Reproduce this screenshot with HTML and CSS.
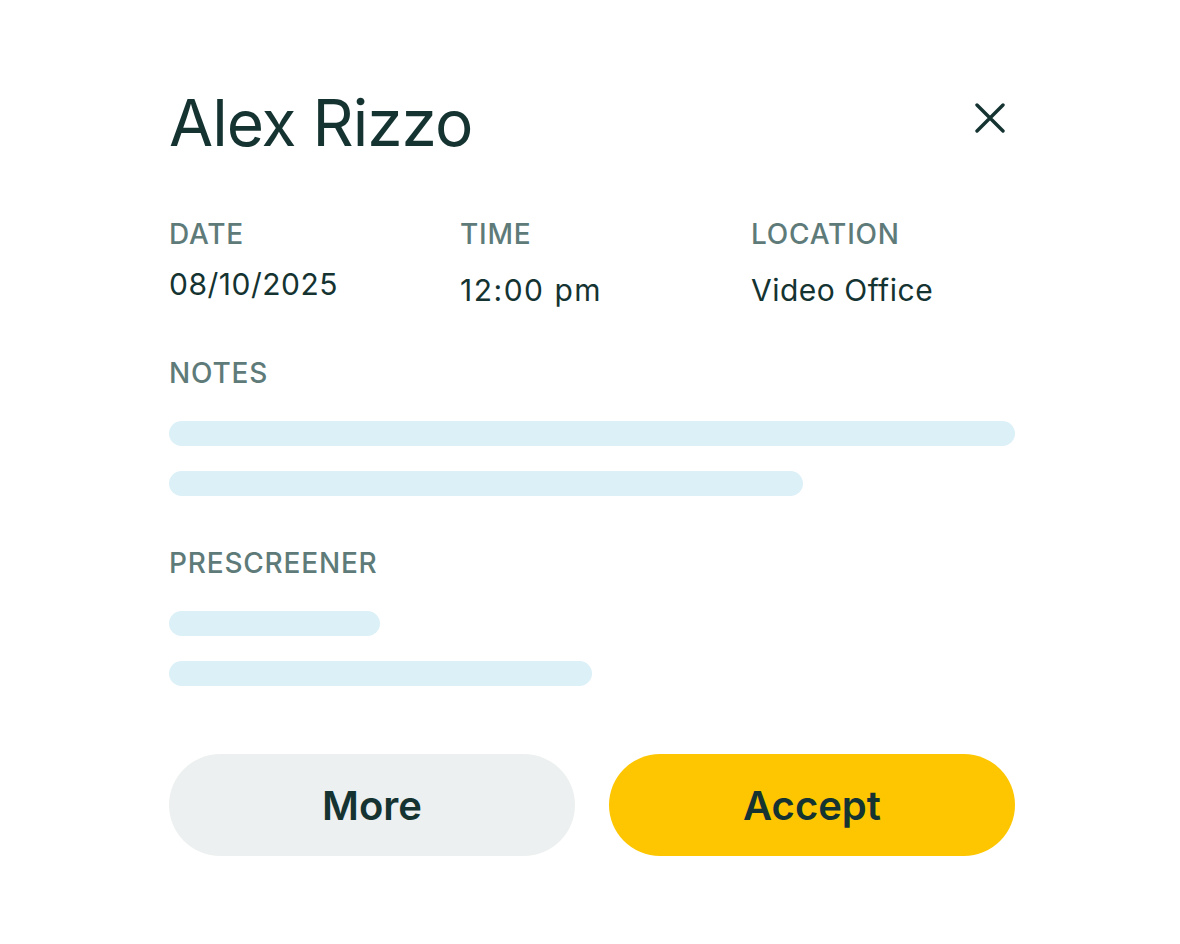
FILE: index.html
```html
<!DOCTYPE html>
<html lang="en">
<head>
<meta charset="utf-8">
<title>Appointment</title>
<link rel="stylesheet" href="styles.css">
</head>
<body>
<main class="card">
  <header class="card-head">
    <h1 class="title">Alex Rizzo</h1>
    <button class="close" aria-label="Close">
      <svg width="30" height="30" viewBox="0 0 30 30" fill="none" stroke="#143331" stroke-width="3.4" stroke-linecap="round">
        <path d="M2 2 L28 28 M28 2 L2 28"/>
      </svg>
    </button>
  </header>

  <section class="details">
    <div class="field">
      <div class="label">DATE</div>
      <div class="value value-date">08/10/2025</div>
    </div>
    <div class="field">
      <div class="label">TIME</div>
      <div class="value value-time">12:00 pm</div>
    </div>
    <div class="field">
      <div class="label">LOCATION</div>
      <div class="value">Video Office</div>
    </div>
  </section>

  <section class="block block-notes">
    <div class="label">NOTES</div>
    <div class="lines">
      <div class="line" style="width:846px"></div>
      <div class="line" style="width:634px"></div>
    </div>
  </section>

  <section class="block block-pre">
    <div class="label">PRESCREENER</div>
    <div class="lines">
      <div class="line" style="width:211px"></div>
      <div class="line" style="width:423px"></div>
    </div>
  </section>

  <footer class="actions">
    <button class="btn btn-more">More</button>
    <button class="btn btn-accept">Accept</button>
  </footer>
</main>
</body>
</html>
```

FILE: styles.css
```css
* { box-sizing: border-box; }
html, body { margin: 0; padding: 0; background: #ffffff; }
body {
  font-family: "Inter", "Liberation Sans", sans-serif;
  color: #143331;
}
.card {
  width: 1180px;
  padding: 83px 165px 0 169px;
}
.card-head {
  display: flex;
  justify-content: space-between;
  align-items: flex-start;
}
.title {
  margin: 0;
  font-size: 64px;
  font-weight: 400;
  line-height: 80px;
  letter-spacing: -1px;
  color: #143331;
}
.close {
  border: 0;
  background: none;
  padding: 0;
  margin: 20px 10px 0 0;
  width: 30px;
  height: 30px;
  cursor: pointer;
}
.close svg { display: block; }
.details {
  display: grid;
  grid-template-columns: 291px 291px 1fr;
  margin-top: 54px;
}
.label {
  font-size: 28px;
  font-weight: 500;
  line-height: 34px;
  color: #5e7b79;
  letter-spacing: 0.8px;
}
.value {
  font-size: 30px;
  line-height: 36px;
  margin-top: 21px;
  letter-spacing: 0.5px;
  color: #143331;
}
.value-date { margin-top: 15px; }
.value-time { letter-spacing: 1.5px; }
.block-notes { margin-top: 48px; }
.block-pre { margin-top: 50px; }
.lines {
  display: flex;
  flex-direction: column;
  gap: 25px;
  margin-top: 31px;
}
.line {
  height: 25px;
  border-radius: 13px;
  background: #dcf0f8;
}
.actions {
  display: grid;
  grid-template-columns: 1fr 1fr;
  gap: 34px;
  margin-top: 68px;
}
.btn {
  height: 102px;
  border: 0;
  border-radius: 51px;
  font-family: "Inter", "Liberation Sans", sans-serif;
  font-size: 40px;
  font-weight: 600;
  color: #143331;
  cursor: pointer;
}
.btn-more { background: #edf0f0; }
.btn-accept { background: #fec600; }
```
